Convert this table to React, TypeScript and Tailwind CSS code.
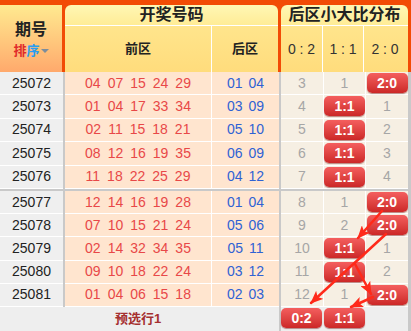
import React from 'react';

const FONT = "font-['Liberation_Sans','Noto_Sans_CJK_SC',sans-serif]";

type Cell = number | string;

const rows: [string, string[], string[], Cell[]][] = [
  ['25072', ['04', '07', '15', '24', '29'], ['01', '04'], [3, 1, '2:0']],
  ['25073', ['01', '04', '17', '33', '34'], ['03', '09'], [4, '1:1', 1]],
  ['25074', ['02', '11', '15', '18', '21'], ['05', '10'], [5, '1:1', 2]],
  ['25075', ['08', '12', '16', '19', '35'], ['06', '09'], [6, '1:1', 3]],
  ['25076', ['11', '18', '22', '25', '29'], ['04', '12'], [7, '1:1', 4]],
  ['25077', ['12', '14', '16', '19', '28'], ['01', '04'], [8, 1, '2:0']],
  ['25078', ['07', '10', '15', '21', '24'], ['05', '06'], [9, 2, '2:0']],
  ['25079', ['02', '14', '32', '34', '35'], ['05', '11'], [10, '1:1', 1]],
  ['25080', ['09', '10', '18', '22', '24'], ['03', '12'], [11, '1:1', 2]],
  ['25081', ['01', '04', '06', '15', '18'], ['02', '03'], [12, 1, '2:0']],
];

function Badge({ text }: { text: string }) {
  return (
    <div className="w-[41px] h-[20px] rounded-[5px] bg-linear-to-b from-[#f45e5e] to-[#cc2727] text-white font-bold text-[14px] leading-[20px] text-center shadow-[0_1px_1px_rgba(110,0,0,0.45)]">
      {text}
    </div>
  );
}

function RatioCell({ v, w, last }: { v: Cell; w: string; last?: boolean }) {
  return (
    <div
      className={`${w} flex justify-center ${typeof v === 'string' ? 'items-start pt-[1px]' : 'items-center'} bg-[#f6efe3] border-b border-white ${last ? '' : 'border-r'}`}
    >
      {typeof v === 'string' ? (
        <Badge text={v} />
      ) : (
        <span className="text-[14px] text-[#a6a6a6]">{v}</span>
      )}
    </div>
  );
}

function DataRow({ row, h }: { row: (typeof rows)[number]; h: string }) {
  const [issue, front, back, ratio] = row;
  return (
    <div className={`flex ${h}`}>
      <div className="w-[63px] flex items-center justify-center bg-[#efefef] border-b border-white text-[14px] text-[#222]">
        {issue}
      </div>
      <div className="w-[147px] ml-[2px] flex items-center justify-center gap-[7px] bg-[#ffe5cf] border-b border-r border-white text-[14px] text-[#e84848]">
        {front.map((n, i) => (
          <span key={i}>{n}</span>
        ))}
      </div>
      <div className="w-[67px] flex items-center justify-center gap-[6px] bg-[#ffe5cf] border-b border-white text-[14px] text-[#2f62d4]">
        {back.map((n, i) => (
          <span key={i}>{n}</span>
        ))}
      </div>
      <div className="ml-[2px] flex">
        <RatioCell v={ratio[0]} w="w-[43px]" />
        <RatioCell v={ratio[1]} w="w-[42px]" />
        <RatioCell v={ratio[2]} w="w-[42px]" last />
      </div>
    </div>
  );
}

export default function App() {
  return (
    <div className={`relative w-[411px] h-[331px] overflow-hidden bg-[#f24b05] ${FONT}`}>
      {/* header panels */}
      <div className="flex gap-[3px] h-[72px] pt-[5px]">
        <div className="w-[62px] flex flex-col items-center justify-center bg-linear-to-b from-[#ffea90] to-[#ffa96c]">
          <div className="mt-[2px] text-[16px] font-bold text-[#222] leading-none">期号</div>
          <div className="mt-[6px] flex items-center text-[13px] font-bold leading-none">
            <span className="text-[#e02a2a]">排</span>
            <span className="text-[#2a9df0]">序</span>
            <span className="ml-[1px] w-0 h-0 border-x-[4px] border-x-transparent border-t-[4px] border-t-[#7d8d9c]" />
          </div>
        </div>

        <div className="w-[213px] flex flex-col rounded-t-[6px] overflow-hidden">
          <div className="h-[21px] flex items-center justify-center bg-linear-to-b from-[#fff7b4] to-[#ffec96] border-b border-white text-[16px] font-bold text-[#222]">
            开奖号码
          </div>
          <div className="flex-1 flex bg-linear-to-b from-[#ffe58c] to-[#ffdc7c] text-[13px] font-bold text-[#222]">
            <div className="w-[147px] flex items-center justify-center border-r border-white">前区</div>
            <div className="flex-1 flex items-center justify-center">后区</div>
          </div>
        </div>

        <div className="w-[127px] flex flex-col rounded-t-[6px] overflow-hidden">
          <div className="h-[21px] flex items-center justify-center bg-linear-to-b from-[#fff7b4] to-[#ffec96] border-b border-white text-[16px] font-semibold text-[#222]">
            后区小大比分布
          </div>
          <div className="flex-1 flex bg-linear-to-b from-[#ffe58c] to-[#ffdc7c] text-[14px] text-[#333]">
            <div className="w-[42px] flex items-center justify-center border-r border-white">0 : 2</div>
            <div className="w-[41px] flex items-center justify-center border-r border-white">1 : 1</div>
            <div className="w-[42px] flex items-center justify-center">2 : 0</div>
          </div>
        </div>
      </div>

      {/* data rows */}
      <div className="flex flex-col bg-[#c9c9c9] h-[259px]">
        {rows.slice(0, 5).map((r) => (
          <DataRow key={r[0]} row={r} h="h-[23.4px]" />
        ))}
        <div className="h-[2px]" />
        {rows.slice(5).map((r) => (
          <DataRow key={r[0]} row={r} h="h-[23.2px]" />
        ))}
        <div className="flex h-[24px]">
          <div className="w-[279px] flex bg-[#eeeeee]">
            <div className="ml-[65px] w-[146px] flex items-center justify-center text-[13px] font-bold text-[#a53030]">
              预选行1
            </div>
          </div>
          <div className="ml-[2px] w-[127px] flex items-start pt-[1px] gap-[2px] bg-[#eeeeee]">
            <Badge text="0:2" />
            <Badge text="1:1" />
          </div>
        </div>
      </div>

      {/* trend arrows */}
      <svg className="absolute inset-0 pointer-events-none" width="411" height="331">
        <defs>
          <marker
            id="ah"
            viewBox="0 0 13 11"
            refX="12"
            refY="5.5"
            markerWidth="13"
            markerHeight="11"
            markerUnits="userSpaceOnUse"
            orient="auto"
          >
            <path d="M0,0 L13,5.5 L0,11 L3,5.5 z" fill="#ff2a1a" />
          </marker>
        </defs>
        <g stroke="#ff2a1a" strokeWidth="2.5" strokeLinecap="round">
          <line x1="382" y1="211" x2="358" y2="238" markerEnd="url(#ah)" />
          <line x1="386" y1="234" x2="311" y2="303" markerEnd="url(#ah)" />
          <line x1="355" y1="264" x2="371" y2="294" markerEnd="url(#ah)" />
          <line x1="373" y1="297" x2="351" y2="307" markerEnd="url(#ah)" />
        </g>
      </svg>
    </div>
  );
}
